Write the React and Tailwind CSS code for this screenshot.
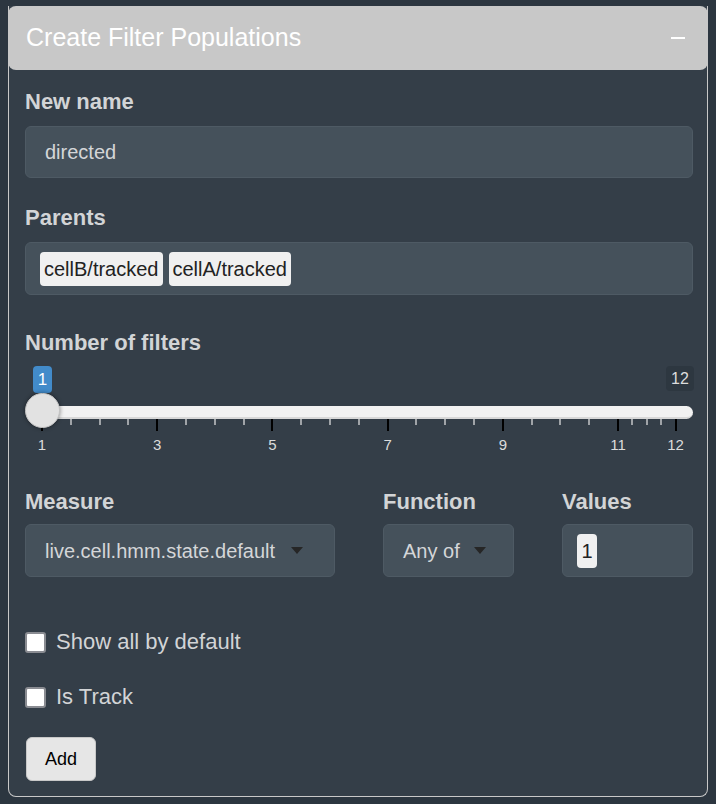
import React from "react";

const UNIT = 57.6;
const pos = (v) => 17 + (v - 1) * UNIT;

const majors = [1, 3, 5, 7, 9, 11, 12];
const minors = [];
for (let v = 1.5; v < 11; v += 0.5) {
  if (!majors.includes(v)) minors.push(v);
}
minors.push(11.25, 11.5, 11.75);

function Label({ children }) {
  return (
    <div className="text-[22px] leading-6 font-bold text-[#d2d4d6]">{children}</div>
  );
}

function Caret() {
  return (
    <span className="inline-block w-0 h-0 border-l-[6px] border-r-[6px] border-t-[7px] border-l-transparent border-r-transparent border-t-[#262626]" />
  );
}

function Slider() {
  return (
    <div className="relative h-[90px] mt-[11px] w-[668px]">
      {/* value badges */}
      <div className="absolute left-[8px] top-0 h-[27px] w-[19px] rounded bg-[#428bca] text-white text-[17px] leading-[27px] text-center">
        1
      </div>
      <div className="absolute right-[-1px] top-0 h-[25px] w-[28px] rounded bg-[#2d3740] text-[#dcdcdc] text-[16px] leading-[25px] text-center">
        12
      </div>

      {/* track */}
      <div className="absolute left-[9px] right-0 top-[40px] h-[13px] rounded-full bg-[#f2f2f2] border-b-2 border-[#d8d8d8]" />

      {/* ticks */}
      {minors.map((v) => (
        <div
          key={"m" + v}
          className="absolute top-[53px] w-[2px] h-[6px] bg-[#a0a4a8]"
          style={{ left: pos(v) - 1 }}
        />
      ))}
      {majors.map((v) => (
        <div
          key={"M" + v}
          className="absolute top-[53px] w-[2px] h-[12px] bg-black"
          style={{ left: pos(v) - 1 }}
        />
      ))}
      {majors.map((v) => (
        <div
          key={"l" + v}
          className="absolute top-[70px] w-[30px] -ml-[15px] text-center text-[15px] leading-[18px] text-[#dcdcdc]"
          style={{ left: pos(v) }}
        >
          {v}
        </div>
      ))}

      {/* handle */}
      <div className="absolute left-0 top-[27px] w-[35px] h-[35px] rounded-full bg-[#e2e2e2] border border-[#c4c4c4] shadow-[0_0_4px_rgba(0,0,0,0.45)]" />
    </div>
  );
}

function Checkbox({ label, className }) {
  return (
    <div className={"flex items-center gap-[10px] " + className}>
      <span className="w-[21px] h-[21px] rounded-[3px] border-[2px] border-[#8a8c92] bg-white" />
      <span className="text-[22px] leading-6 text-[#d2d4d6]">{label}</span>
    </div>
  );
}

export default function App() {
  return (
    <div className="min-h-screen w-full bg-[#2c3640] pt-[6px] px-[8px] font-['Liberation_Sans',Arial,sans-serif]">
      <div className="w-[700px] h-[791px] bg-[#343e48] border border-t-0 border-[#c8c8c8] rounded-b-lg">
        {/* header */}
        <div className="-mx-px h-[64px] rounded-lg bg-[#c8c8c8] flex items-center justify-between pl-[18px] pr-[23px]">
          <h1 className="text-[25px] text-white">Create Filter Populations</h1>
          <span className="block w-[14px] h-[2px] bg-white" />
        </div>

        <div className="pl-[16px] pr-[14px] pt-[20px]">
          <Label>New name</Label>
          <div className="mt-[12px] h-[52px] rounded-md bg-[#45515b] border border-[#4e5a64] flex items-center pl-[19px] text-[20px] text-[#d4d6d8]">
            directed
          </div>

          <div className="mt-[28px]">
            <Label>Parents</Label>
          </div>
          <div className="mt-[12px] h-[53px] rounded-md bg-[#45515b] border border-[#4e5a64] flex items-center gap-[6px] pl-[14px]">
            <span className="h-[34px] px-[4px] rounded bg-[#f0f0f0] text-[20px] leading-[34px] text-[#222]">
              cellB/tracked
            </span>
            <span className="h-[34px] px-[4px] rounded bg-[#f0f0f0] text-[20px] leading-[34px] text-[#222]">
              cellA/tracked
            </span>
          </div>

          <div className="mt-[36px]">
            <Label>Number of filters</Label>
          </div>
          <Slider />

          <div className="mt-[34px] grid grid-cols-[310px_131px_131px] gap-x-12">
            <div>
              <Label>Measure</Label>
              <div className="mt-[10px] h-[53px] rounded-md bg-[#45515b] border border-[#4e5a64] flex items-center justify-between pl-[19px] pr-[31px] text-[20px] text-[#d4d6d8]">
                <span>live.cell.hmm.state.default</span>
                <Caret />
              </div>
            </div>
            <div>
              <Label>Function</Label>
              <div className="mt-[10px] h-[53px] rounded-md bg-[#45515b] border border-[#4e5a64] flex items-center justify-between pl-[19px] pr-[27px] text-[20px] text-[#d4d6d8]">
                <span>Any of</span>
                <Caret />
              </div>
            </div>
            <div>
              <Label>Values</Label>
              <div className="mt-[10px] h-[53px] rounded-md bg-[#45515b] border border-[#4e5a64] flex items-center pl-[14px]">
                <span className="h-[34px] w-[20px] rounded bg-[#f0f0f0] text-[20px] leading-[34px] text-center text-[#222]">
                  1
                </span>
              </div>
            </div>
          </div>

          <Checkbox label="Show all by default" className="mt-[53px]" />
          <Checkbox label="Is Track" className="mt-[31px]" />

          <button className="mt-[28px] ml-px w-[70px] h-[44px] rounded-md bg-[#e6e6e6] border border-[#c8c8c8] text-[18px] text-black">
            Add
          </button>
        </div>
      </div>
    </div>
  );
}
